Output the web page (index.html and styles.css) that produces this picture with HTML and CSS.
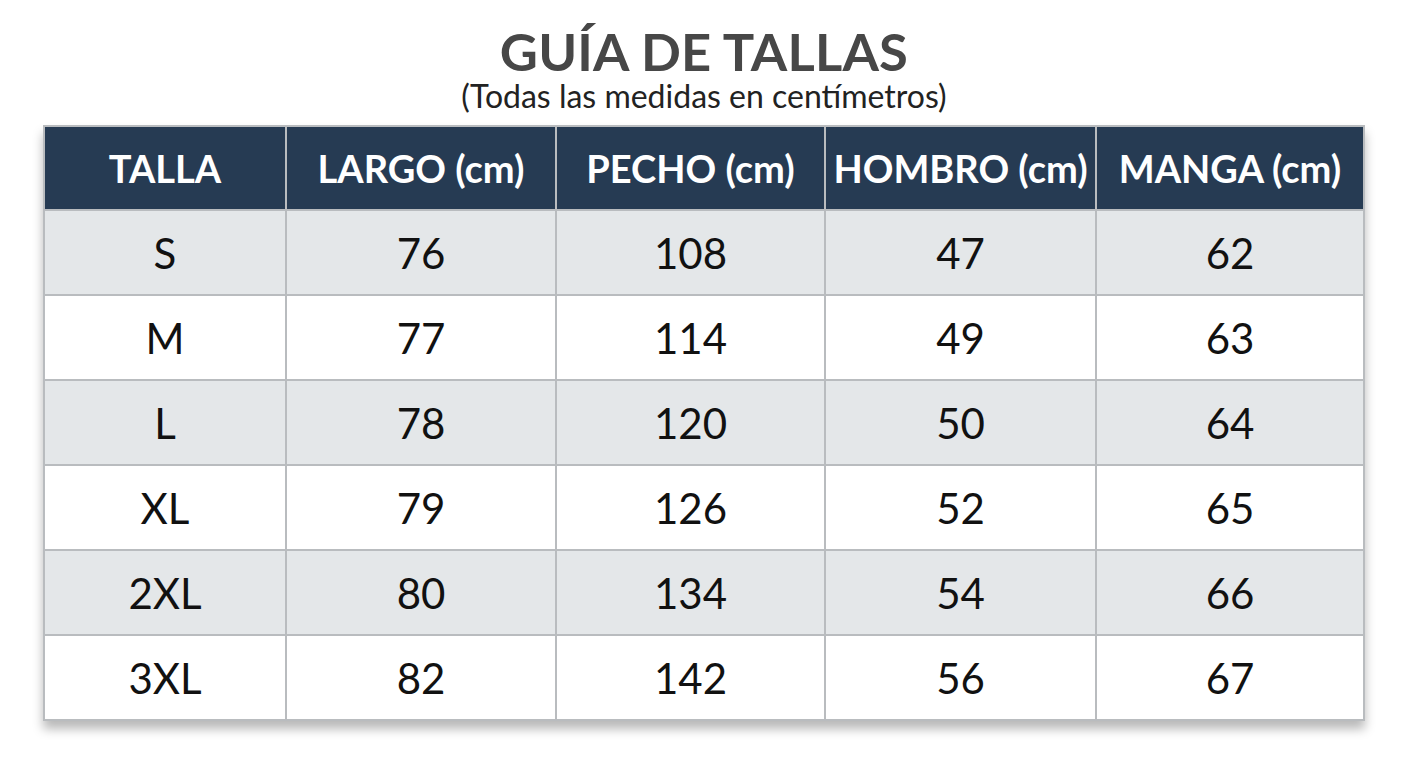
FILE: index.html
```html
<!DOCTYPE html>
<html lang="es">
<head>
<meta charset="utf-8">
<title>Guía de tallas</title>
<link rel="stylesheet" href="styles.css">
</head>
<body>
<main class="page">
  <header class="heading">
    <h1 class="title">GUÍA DE TALLAS</h1>
    <p class="subtitle">(Todas las medidas en centímetros)</p>
  </header>
  <table class="sizes">
    <thead>
      <tr>
        <th class="c1">TALLA</th>
        <th class="c2">LARGO (cm)</th>
        <th class="c3">PECHO (cm)</th>
        <th class="c4">HOMBRO (cm)</th>
        <th class="c5">MANGA (cm)</th>
      </tr>
    </thead>
    <tbody>
      <tr><td>S</td><td>76</td><td>108</td><td>47</td><td>62</td></tr>
      <tr><td>M</td><td>77</td><td>114</td><td>49</td><td>63</td></tr>
      <tr><td>L</td><td>78</td><td>120</td><td>50</td><td>64</td></tr>
      <tr><td>XL</td><td>79</td><td>126</td><td>52</td><td>65</td></tr>
      <tr><td>2XL</td><td>80</td><td>134</td><td>54</td><td>66</td></tr>
      <tr><td>3XL</td><td>82</td><td>142</td><td>56</td><td>67</td></tr>
    </tbody>
  </table>
</main>
</body>
</html>
```
FILE: styles.css
```css
html, body {
  margin: 0;
  padding: 0;
  background: #ffffff;
}
body {
  font-family: Lato, "Noto Sans", sans-serif;
  color: #111;
}
.page {
  width: 1408px;
  height: 768px;
  display: flex;
  flex-direction: column;
  align-items: center;
}
.heading {
  text-align: center;
  padding-top: 25px;
}
.title {
  margin: 0;
  font-size: 52.5px;
  font-weight: 700;
  line-height: 52px;
  color: #474747;
  letter-spacing: 0.2px;
}
.subtitle {
  margin: 0;
  font-size: 32px;
  line-height: 38px;
  color: #222;
}
.sizes {
  margin-top: 10px;
  border-collapse: collapse;
  width: 1322px;
  table-layout: fixed;
  box-shadow: 0 8px 10px rgba(0, 0, 0, 0.28);
  border: 2px solid #b9bcbf;
}
.sizes .c1 { width: 240px; }
.sizes .c2 { width: 268px; }
.sizes .c3 { width: 267px; }
.sizes .c4 { width: 269px; }
.sizes th, .sizes td {
  border: 2px solid #b9bcbf;
  text-align: center;
  padding: 0;
}
.sizes th {
  height: 82px;
  background: #263b53;
  color: #ffffff;
  font-size: 38px;
  font-weight: 700;
  white-space: nowrap;
}
.sizes td {
  height: 83px;
  font-size: 42px;
  font-weight: 400;
  color: #111;
}
.sizes tbody tr:nth-child(odd) td {
  background: #e4e7e9;
}
.sizes tbody tr:nth-child(even) td {
  background: #ffffff;
}
```
